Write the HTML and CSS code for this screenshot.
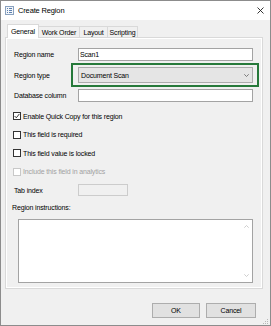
FILE: index.html
```html
<!DOCTYPE html>
<html>
<head>
	<meta charset="utf-8">
	<title>Create Region</title>
	<link rel="stylesheet" href="styles.css">
</head>
<body>
	<div class="window">
		<div class="titlebar">
			<svg class="app-icon" width="9" height="9" viewBox="0 0 9 9">
				<rect x="0.5" y="0.5" width="8" height="8" fill="#f3f6fa" stroke="#8aa2bf"/>
				<rect x="2" y="2" width="1" height="1" fill="#5b7fae"/>
				<rect x="4" y="2" width="3" height="1" fill="#5b7fae"/>
				<rect x="2" y="4" width="1" height="1" fill="#5b7fae"/>
				<rect x="4" y="4" width="3" height="1" fill="#5b7fae"/>
				<rect x="2" y="6" width="1" height="1" fill="#5b7fae"/>
				<rect x="4" y="6" width="3" height="1" fill="#5b7fae"/>
			</svg>
			<span class="title">Create Region</span>
			<svg class="close" width="7" height="7" viewBox="0 0 7 7">
				<path d="M0.5 0.5 L6.5 6.5 M6.5 0.5 L0.5 6.5" stroke="#1f1f1f" stroke-width="0.9"/>
			</svg>
		</div>

		<div class="tabs">
			<div class="tab active tab-general">General</div>
			<div class="tab tab-order">Work Order</div>
			<div class="tab tab-layout">Layout</div>
			<div class="tab tab-script">Scripting</div>
		</div>

		<div class="panel">
			<div class="field row-name">
				<label>Region name</label>
				<div class="textbox">Scan1</div>
			</div>
			<div class="field row-type">
				<label>Region type</label>
				<div class="combo">
					<span>Document Scan</span>
					<svg class="chevron" width="5" height="3" viewBox="0 0 5 3">
						<path d="M0.3 0.3 L2.5 2.5 L4.7 0.3" fill="none" stroke="#606060" stroke-width="0.8"/>
					</svg>
				</div>
			</div>
			<div class="field row-db">
				<label>Database column</label>
				<div class="textbox"></div>
			</div>

			<div class="checks">
				<div class="check">
					<span class="box">
						<svg width="6" height="6" viewBox="0 0 6 6">
							<path d="M0.6 3 L2.3 4.8 L5.4 0.9" fill="none" stroke="#222" stroke-width="0.9"/>
						</svg>
					</span>
					<span>Enable Quick Copy for this region</span>
				</div>
				<div class="check">
					<span class="box"></span>
					<span>This field is required</span>
				</div>
				<div class="check">
					<span class="box"></span>
					<span>This field value is locked</span>
				</div>
				<div class="check disabled">
					<span class="box"></span>
					<span>Include this field in analytics</span>
				</div>
			</div>

			<div class="field row-tab">
				<label>Tab index</label>
				<div class="textbox off"></div>
			</div>

			<div class="notes-label">Region instructions:</div>
			<div class="notes">
				<div class="notes-text"></div>
				<div class="scroll">
					<svg width="5" height="3" viewBox="0 0 5 3">
						<path d="M0.3 2.7 L2.5 0.5 L4.7 2.7" fill="none" stroke="#c2c2c2" stroke-width="0.8"/>
					</svg>
					<svg width="5" height="3" viewBox="0 0 5 3">
						<path d="M0.3 0.3 L2.5 2.5 L4.7 0.3" fill="none" stroke="#c2c2c2" stroke-width="0.8"/>
					</svg>
				</div>
			</div>
		</div>

		<div class="buttons">
			<div class="btn btn-ok">OK</div>
			<div class="btn btn-cancel">Cancel</div>
		</div>
		<div class="grip-row">
			<svg width="7" height="7" viewBox="0 0 7 7">
				<rect x="5" y="1" width="1" height="1" fill="#b8b8b8"/>
				<rect x="3" y="3" width="1" height="1" fill="#b8b8b8"/>
				<rect x="5" y="3" width="1" height="1" fill="#b8b8b8"/>
				<rect x="1" y="5" width="1" height="1" fill="#b8b8b8"/>
				<rect x="3" y="5" width="1" height="1" fill="#b8b8b8"/>
				<rect x="5" y="5" width="1" height="1" fill="#b8b8b8"/>
			</svg>
		</div>
	</div>
</body>
</html>
```

FILE: styles.css
```css
*{
	box-sizing: border-box;
}
body{
	margin: 0;
	font-family: "Liberation Sans", Arial, sans-serif;
	font-size: 7px;
	letter-spacing: -0.15px;
	color: #000;
}
.window{
	width: 271px;
	height: 326px;
	border: 1px solid #8c8c8c;
	background-color: #f0f0f0;
	display: flex;
	flex-direction: column;
}
.titlebar{
	height: 19px;
	flex: none;
	background-color: #fff;
	display: flex;
	align-items: center;
	padding: 0 6px 0 4px;
}
.title{
	margin-left: 4px;
	font-size: 7.5px;
}
.close{
	margin-left: auto;
}

/* tabs */
.tabs{
	height: 17px;
	flex: none;
	display: flex;
	align-items: flex-end;
	padding-left: 6px;
}
.tab{
	height: 11px;
	border: 1px solid #d9d9d9;
	border-bottom: none;
	background-color: #f0f0f0;
	display: flex;
	align-items: center;
	justify-content: center;
	margin-left: -1px;
}
.tab.active{
	height: 14px;
	margin-left: 0;
	margin-bottom: -1px;
	background-color: #fff;
	position: relative;
	z-index: 1;
}
.tab-general{ width: 32px; }
.tab-order{ width: 42px; }
.tab-layout{ width: 29px; }
.tab-script{ width: 31px; }

.panel{
	margin-left: 4px;
	width: 258px;
	height: 252px;
	flex: none;
	border: 1px solid #d9d9d9;
	box-shadow: inset 1px 1px 0 #fff, inset -1px -1px 0 #fff;
	padding-left: 8px;
	display: flex;
	flex-direction: column;
}

/* fields */
.field{
	display: flex;
	align-items: center;
	flex: none;
}
.field label{
	width: 64px;
}
.row-name{ margin-top: 10px; height: 13px; }
.row-type{ margin-top: 6px; height: 16px; }
.row-db{ margin-top: 6px; height: 13px; }
.row-tab{ margin-top: 3px; height: 12px; }

.textbox{
	width: 175px;
	height: 13px;
	background-color: #fff;
	border: 1px solid #a3a3a3;
	padding-left: 1px;
	display: flex;
	align-items: center;
}
.textbox.off{
	width: 50px;
	height: 12px;
	background-color: #f0f0f0;
	border-color: #cccccc;
}
.combo{
	width: 175px;
	height: 16px;
	background-color: #e5e5e5;
	border: 1px solid #acacac;
	padding: 0 3px 0 2px;
	display: flex;
	align-items: center;
	position: relative;
}
.combo::after{
	content: "";
	position: absolute;
	top: -5px;
	bottom: -5px;
	left: -8px;
	right: -7px;
	border: 2px solid #26793a;
}
.chevron{
	margin-left: auto;
}

/* checkboxes */
.checks{
	margin-top: 5px;
	margin-left: -1px;
	flex: none;
}
.check{
	height: 18.5px;
	display: flex;
	align-items: center;
}
.box{
	width: 8px;
	height: 8px;
	border: 1px solid #333;
	background-color: #fff;
	margin-right: 2px;
	display: flex;
	align-items: center;
	justify-content: center;
}
.check.disabled{
	color: #a2a2a2;
}
.check.disabled .box{
	border-color: #c8c8c8;
}

/* instructions */
.notes-label{
	margin-top: 6px;
	margin-left: -2px;
	height: 12px;
	line-height: 12px;
	flex: none;
}
.notes{
	margin-top: 5px;
	margin-left: 4px;
	width: 235px;
	height: 64px;
	flex: none;
	background-color: #fff;
	border: 1px solid #a3a3a3;
	display: flex;
}
.notes-text{
	flex: 1;
}
.scroll{
	width: 12px;
	padding: 5px 0;
	display: flex;
	flex-direction: column;
	justify-content: space-between;
	align-items: center;
}

/* buttons */
.buttons{
	margin-top: 14px;
	height: 15px;
	flex: none;
	display: flex;
	justify-content: flex-end;
	gap: 6px;
	padding-right: 14px;
}
.btn{
	height: 15px;
	background-color: #e1e1e1;
	border: 1px solid #adadad;
	display: flex;
	align-items: center;
	justify-content: center;
}
.btn-ok{ width: 48px; }
.btn-cancel{ width: 50px; }
.grip-row{
	height: 7px;
	flex: none;
	display: flex;
	justify-content: flex-end;
	padding-right: 1px;
}
```
